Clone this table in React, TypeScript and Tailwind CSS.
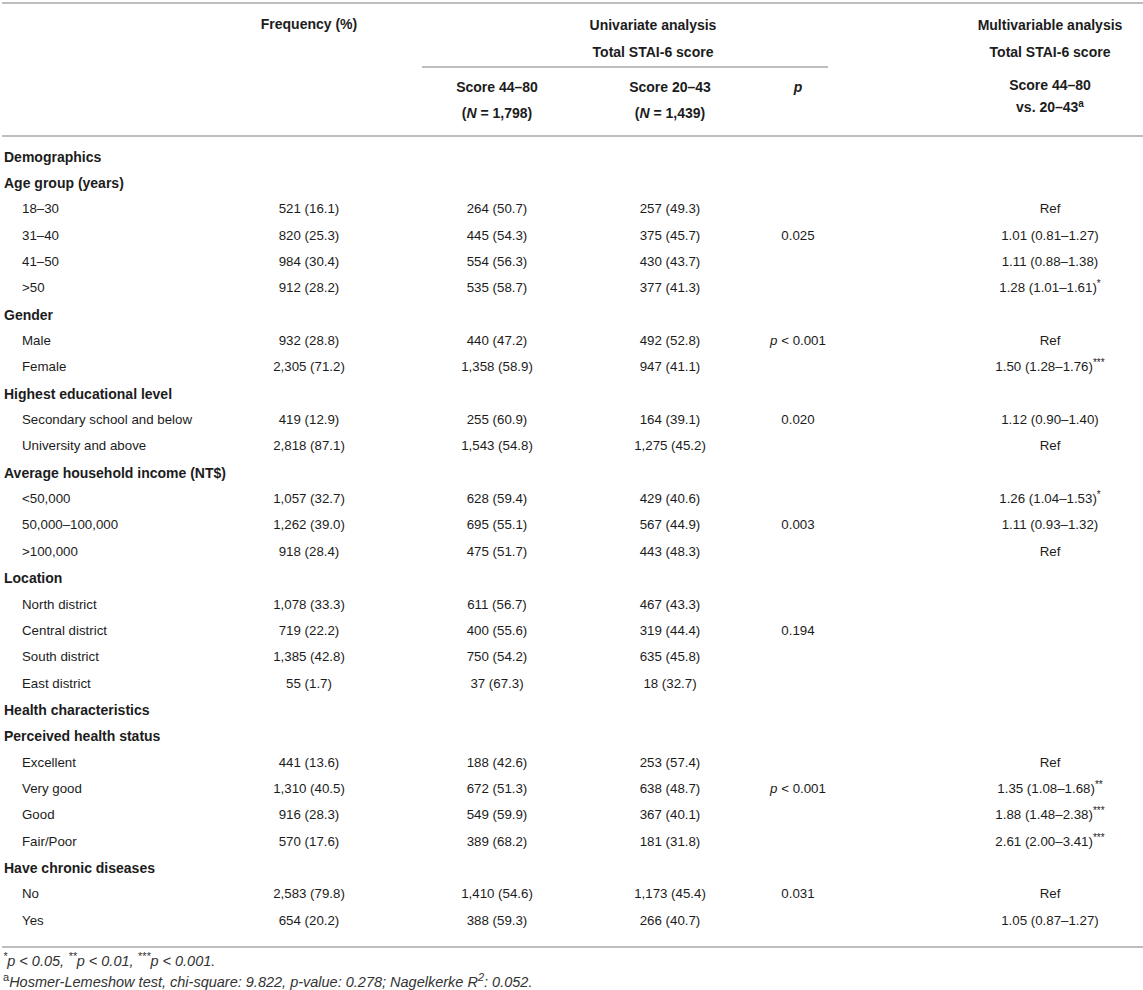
import React from 'react';

type Row =
  | { kind: 'section'; label: string }
  | { kind: 'group'; label: string }
  | { kind: 'item'; label: string; freq: string; hi: string; lo: string; p?: React.ReactNode; or?: string; stars?: string };

const pLess = (
  <span>
    <i>p</i> &lt; 0.001
  </span>
);

const rows: Row[] = [
  { kind: 'section', label: 'Demographics' },
  { kind: 'group', label: 'Age group (years)' },
  { kind: 'item', label: '18–30', freq: '521 (16.1)', hi: '264 (50.7)', lo: '257 (49.3)', or: 'Ref' },
  { kind: 'item', label: '31–40', freq: '820 (25.3)', hi: '445 (54.3)', lo: '375 (45.7)', p: '0.025', or: '1.01 (0.81–1.27)' },
  { kind: 'item', label: '41–50', freq: '984 (30.4)', hi: '554 (56.3)', lo: '430 (43.7)', or: '1.11 (0.88–1.38)' },
  { kind: 'item', label: '>50', freq: '912 (28.2)', hi: '535 (58.7)', lo: '377 (41.3)', or: '1.28 (1.01–1.61)', stars: '*' },
  { kind: 'group', label: 'Gender' },
  { kind: 'item', label: 'Male', freq: '932 (28.8)', hi: '440 (47.2)', lo: '492 (52.8)', p: pLess, or: 'Ref' },
  { kind: 'item', label: 'Female', freq: '2,305 (71.2)', hi: '1,358 (58.9)', lo: '947 (41.1)', or: '1.50 (1.28–1.76)', stars: '***' },
  { kind: 'group', label: 'Highest educational level' },
  { kind: 'item', label: 'Secondary school and below', freq: '419 (12.9)', hi: '255 (60.9)', lo: '164 (39.1)', p: '0.020', or: '1.12 (0.90–1.40)' },
  { kind: 'item', label: 'University and above', freq: '2,818 (87.1)', hi: '1,543 (54.8)', lo: '1,275 (45.2)', or: 'Ref' },
  { kind: 'group', label: 'Average household income (NT$)' },
  { kind: 'item', label: '<50,000', freq: '1,057 (32.7)', hi: '628 (59.4)', lo: '429 (40.6)', or: '1.26 (1.04–1.53)', stars: '*' },
  { kind: 'item', label: '50,000–100,000', freq: '1,262 (39.0)', hi: '695 (55.1)', lo: '567 (44.9)', p: '0.003', or: '1.11 (0.93–1.32)' },
  { kind: 'item', label: '>100,000', freq: '918 (28.4)', hi: '475 (51.7)', lo: '443 (48.3)', or: 'Ref' },
  { kind: 'group', label: 'Location' },
  { kind: 'item', label: 'North district', freq: '1,078 (33.3)', hi: '611 (56.7)', lo: '467 (43.3)' },
  { kind: 'item', label: 'Central district', freq: '719 (22.2)', hi: '400 (55.6)', lo: '319 (44.4)', p: '0.194' },
  { kind: 'item', label: 'South district', freq: '1,385 (42.8)', hi: '750 (54.2)', lo: '635 (45.8)' },
  { kind: 'item', label: 'East district', freq: '55 (1.7)', hi: '37 (67.3)', lo: '18 (32.7)' },
  { kind: 'section', label: 'Health characteristics' },
  { kind: 'group', label: 'Perceived health status' },
  { kind: 'item', label: 'Excellent', freq: '441 (13.6)', hi: '188 (42.6)', lo: '253 (57.4)', or: 'Ref' },
  { kind: 'item', label: 'Very good', freq: '1,310 (40.5)', hi: '672 (51.3)', lo: '638 (48.7)', p: pLess, or: '1.35 (1.08–1.68)', stars: '**' },
  { kind: 'item', label: 'Good', freq: '916 (28.3)', hi: '549 (59.9)', lo: '367 (40.1)', or: '1.88 (1.48–2.38)', stars: '***' },
  { kind: 'item', label: 'Fair/Poor', freq: '570 (17.6)', hi: '389 (68.2)', lo: '181 (31.8)', or: '2.61 (2.00–3.41)', stars: '***' },
  { kind: 'group', label: 'Have chronic diseases' },
  { kind: 'item', label: 'No', freq: '2,583 (79.8)', hi: '1,410 (54.6)', lo: '1,173 (45.4)', p: '0.031', or: 'Ref' },
  { kind: 'item', label: 'Yes', freq: '654 (20.2)', hi: '388 (59.3)', lo: '266 (40.7)', or: '1.05 (0.87–1.27)' },
];

export default function App() {
  return (
    <div className="w-[1143px] h-[990px] bg-white text-[#1c1c1c] text-[14px]" style={{ fontFamily: '"Liberation Sans", Arial, sans-serif' }}>
      <div className="pt-[2px] pl-[2px]">
        <table className="w-[1141px] table-fixed border-collapse">
          <colgroup>
            <col className="w-[198px]" />
            <col className="w-[218px]" />
            <col className="w-[158px]" />
            <col className="w-[188px]" />
            <col className="w-[68px]" />
            <col className="w-[125px]" />
            <col className="w-[186px]" />
          </colgroup>
          <thead className="font-bold">
            <tr className="border-t-2 border-[#bdbdbd]">
              <th />
              <th className="align-top pt-[10px] font-bold">Frequency (%)</th>
              <th colSpan={3} className="align-top pt-[8px] pl-[56px] font-bold leading-[27px]">
                <div>Univariate analysis</div>
                <div>Total STAI-6 score</div>
              </th>
              <th />
              <th className="align-top pt-[8px] font-bold leading-[27px]">
                <div>Multivariable analysis</div>
                <div>Total STAI-6 score</div>
              </th>
            </tr>
            <tr>
              <th />
              <th />
              <th colSpan={3} className="px-[4px]">
                <div className="border-t-2 border-[#bdbdbd]" />
              </th>
              <th />
              <th />
            </tr>
            <tr className="border-b-2 border-[#bdbdbd] leading-[26px]">
              <th />
              <th />
              <th className="align-top pt-[6px] pb-[9px] font-bold">
                <div>Score 44–80</div>
                <div>
                  (<i>N</i> = 1,798)
                </div>
              </th>
              <th className="align-top pt-[6px] pb-[9px] font-bold">
                <div>Score 20–43</div>
                <div>
                  (<i>N</i> = 1,439)
                </div>
              </th>
              <th className="align-top pt-[6px] font-bold">
                <i>p</i>
              </th>
              <th />
              <th className="align-top pt-[6px] font-bold leading-[22px]">
                <div>Score 44–80</div>
                <div>
                  vs. 20–43<sup className="text-[10px]">a</sup>
                </div>
              </th>
            </tr>
          </thead>
          <tbody className="leading-[26.34px] text-[13.3px]">
            {rows.map((r, i) => {
              if (r.kind !== 'item') {
                return (
                  <tr key={i} className={i === 0 ? 'h-[34px] align-bottom' : ''}>
                    <td colSpan={7} className="font-bold text-[14px] pl-[2px] whitespace-nowrap">
                      {r.label}
                    </td>
                  </tr>
                );
              }
              const last = i === rows.length - 1;
              return (
                <tr key={i} className={last ? 'border-b-2 border-[#bdbdbd] align-top' : ''}>
                  <td className={`pl-[20px] whitespace-nowrap ${last ? 'pb-[12px]' : ''}`}>{r.label}</td>
                  <td className="text-center">{r.freq}</td>
                  <td className="text-center">{r.hi}</td>
                  <td className="text-center">{r.lo}</td>
                  <td className="text-center whitespace-nowrap">{r.p}</td>
                  <td />
                  <td className="text-center whitespace-nowrap">
                    {r.or}
                    {r.stars && <sup className="text-[10px]">{r.stars}</sup>}
                  </td>
                </tr>
              );
            })}
          </tbody>
        </table>
        <div className="pt-[3px] pl-[1px] text-[14.5px] italic leading-[21px] text-[#333]">
          <div>
            <sup className="text-[11px]">*</sup>p &lt; 0.05, <sup className="text-[11px]">**</sup>p &lt; 0.01, <sup className="text-[11px]">***</sup>p &lt; 0.001.
          </div>
          <div>
            <sup className="text-[11px] not-italic">a</sup>Hosmer-Lemeshow test, chi-square: 9.822, p-value: 0.278; Nagelkerke R<sup className="text-[11px]">2</sup>: 0.052.
          </div>
        </div>
      </div>
    </div>
  );
}
